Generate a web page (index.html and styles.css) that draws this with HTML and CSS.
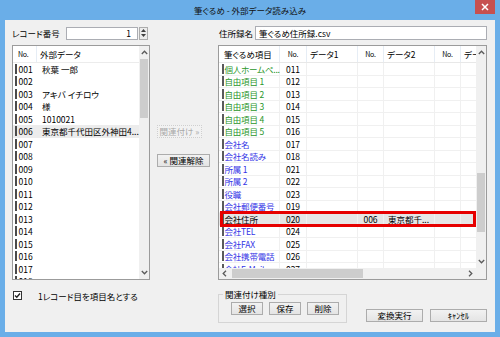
FILE: index.html
```html
<!DOCTYPE html>
<html lang="ja">
<head>
<meta charset="utf-8">
<title>筆ぐるめ - 外部データ読み込み</title>
<link rel="stylesheet" href="styles.css">
</head>
<body>
<div class="window">
  <div class="titlebar">
    <span></span>
    <span class="title">筆ぐるめ - 外部データ読み込み</span>
    <span class="close"><svg width="8" height="8" viewBox="0 0 8 8"><path d="M1 1L7 7M7 1L1 7" stroke="#fff" stroke-width="1.5"/></svg></span>
  </div>
  <div class="client">
    <div class="leftcol">
      <div class="toprow">
        <span class="lbl-rec">レコード番号</span>
        <span class="spin-input">1</span>
        <span class="spin-btn">
          <span class="spin-half"><svg width="5" height="3" viewBox="0 0 5 3"><path d="M0 3L2.5 0L5 3Z" fill="#404040"/></svg></span>
          <span class="spin-half"><svg width="5" height="3" viewBox="0 0 5 3"><path d="M0 0L2.5 3L5 0Z" fill="#404040"/></svg></span>
        </span>
      </div>
      <div class="list">
        <div class="view">
          <div class="lhead"><span class="lc-no no">No.</span><span class="lc-data">外部データ</span></div>
          <div class="lrow"><span class="lc-no"><i class="mk"></i>001</span><span class="lc-data">秋葉 一郎</span></div>
          <div class="lrow"><span class="lc-no"><i class="mk"></i>002</span><span class="lc-data"></span></div>
          <div class="lrow"><span class="lc-no"><i class="mk"></i>003</span><span class="lc-data">アキバ イチロウ</span></div>
          <div class="lrow"><span class="lc-no"><i class="mk"></i>004</span><span class="lc-data">様</span></div>
          <div class="lrow"><span class="lc-no"><i class="mk"></i>005</span><span class="lc-data">1010021</span></div>
          <div class="lrow sel"><span class="lc-no"><i class="mk"></i>006</span><span class="lc-data">東京都千代田区外神田4...</span></div>
          <div class="lrow"><span class="lc-no"><i class="mk"></i>007</span><span class="lc-data"></span></div>
          <div class="lrow"><span class="lc-no"><i class="mk"></i>008</span><span class="lc-data"></span></div>
          <div class="lrow"><span class="lc-no"><i class="mk"></i>009</span><span class="lc-data"></span></div>
          <div class="lrow"><span class="lc-no"><i class="mk"></i>010</span><span class="lc-data"></span></div>
          <div class="lrow"><span class="lc-no"><i class="mk"></i>011</span><span class="lc-data"></span></div>
          <div class="lrow"><span class="lc-no"><i class="mk"></i>012</span><span class="lc-data"></span></div>
          <div class="lrow"><span class="lc-no"><i class="mk"></i>013</span><span class="lc-data"></span></div>
          <div class="lrow"><span class="lc-no"><i class="mk"></i>014</span><span class="lc-data"></span></div>
          <div class="lrow"><span class="lc-no"><i class="mk"></i>015</span><span class="lc-data"></span></div>
          <div class="lrow"><span class="lc-no"><i class="mk"></i>016</span><span class="lc-data"></span></div>
          <div class="lrow"><span class="lc-no"><i class="mk"></i>017</span><span class="lc-data"></span></div>
          <div class="lrow"><span class="lc-no"><i class="mk"></i>018</span><span class="lc-data"></span></div>
        </div>
        <div class="vscroll">
          <span class="arr"><svg width="7" height="5" viewBox="0 0 7 5"><path d="M0.8 4L3.5 1.2L6.2 4" fill="none" stroke="#5a5a5a" stroke-width="1.3"/></svg></span>
          <span class="thumb thumb-left"></span>
          <span class="fill"></span>
          <span class="arr"><svg width="7" height="5" viewBox="0 0 7 5"><path d="M0.8 1L3.5 3.8L6.2 1" fill="none" stroke="#5a5a5a" stroke-width="1.3"/></svg></span>
        </div>
      </div>
      <div class="check">
        <span class="box"><svg width="7" height="7" viewBox="0 0 7 7"><path d="M1 3.5L2.8 5.3L6 1.5" fill="none" stroke="#222" stroke-width="1.4"/></svg></span>
        <span class="check-text">1レコード目を項目名とする</span>
      </div>
    </div>

    <div class="midcol">
      <button class="btn btn-assoc">関連付け »</button>
      <button class="btn btn-unassoc">« 関連解除</button>
    </div>

    <div class="rightcol">
      <div class="toprow">
        <span class="lbl-addr">住所録名</span>
        <span class="text-input">筆ぐるめ住所録.csv</span>
      </div>
      <div class="grid">
        <div class="gview">
          <div class="ghead">
            <span class="gc-name">筆ぐるめ項目</span>
            <span class="gc-no no">No.</span>
            <span class="gc-data">データ1</span>
            <span class="gc-no no">No.</span>
            <span class="gc-data">データ2</span>
            <span class="gc-no no">No.</span>
            <span class="gc-data">データ3</span>
          </div>
          <div class="grow green"><span class="gc-name"><i class="mk"></i>個人ホームペ...</span><span class="gc-no">011</span><span></span><span></span><span></span><span></span><span></span></div>
          <div class="grow green"><span class="gc-name"><i class="mk"></i>自由項目 1</span><span class="gc-no">012</span><span></span><span></span><span></span><span></span><span></span></div>
          <div class="grow green"><span class="gc-name"><i class="mk"></i>自由項目 2</span><span class="gc-no">013</span><span></span><span></span><span></span><span></span><span></span></div>
          <div class="grow green"><span class="gc-name"><i class="mk"></i>自由項目 3</span><span class="gc-no">014</span><span></span><span></span><span></span><span></span><span></span></div>
          <div class="grow green"><span class="gc-name"><i class="mk"></i>自由項目 4</span><span class="gc-no">015</span><span></span><span></span><span></span><span></span><span></span></div>
          <div class="grow green"><span class="gc-name"><i class="mk"></i>自由項目 5</span><span class="gc-no">016</span><span></span><span></span><span></span><span></span><span></span></div>
          <div class="grow blue"><span class="gc-name"><i class="mk"></i>会社名</span><span class="gc-no">017</span><span></span><span></span><span></span><span></span><span></span></div>
          <div class="grow blue"><span class="gc-name"><i class="mk"></i>会社名読み</span><span class="gc-no">018</span><span></span><span></span><span></span><span></span><span></span></div>
          <div class="grow blue"><span class="gc-name"><i class="mk"></i>所属 1</span><span class="gc-no">021</span><span></span><span></span><span></span><span></span><span></span></div>
          <div class="grow blue"><span class="gc-name"><i class="mk"></i>所属 2</span><span class="gc-no">022</span><span></span><span></span><span></span><span></span><span></span></div>
          <div class="grow blue"><span class="gc-name"><i class="mk"></i>役職</span><span class="gc-no">023</span><span></span><span></span><span></span><span></span><span></span></div>
          <div class="grow blue"><span class="gc-name"><i class="mk"></i>会社郵便番号</span><span class="gc-no">019</span><span></span><span></span><span></span><span></span><span></span></div>
          <div class="grow linked"><span class="gc-name"><i class="mk"></i>会社住所</span><span class="gc-no">020</span><span></span><span class="gc-no">006</span><span class="gc-data">東京都千...</span><span></span><span></span></div>
          <div class="grow blue"><span class="gc-name"><i class="mk"></i>会社TEL</span><span class="gc-no">024</span><span></span><span></span><span></span><span></span><span></span></div>
          <div class="grow blue"><span class="gc-name"><i class="mk"></i>会社FAX</span><span class="gc-no">025</span><span></span><span></span><span></span><span></span><span></span></div>
          <div class="grow blue"><span class="gc-name"><i class="mk"></i>会社携帯電話</span><span class="gc-no">026</span><span></span><span></span><span></span><span></span><span></span></div>
          <div class="grow blue"><span class="gc-name"><i class="mk"></i>会社E-Mail</span><span class="gc-no">027</span><span></span><span></span><span></span><span></span><span></span></div>
        </div>
        <div class="vscroll">
          <span class="arr"><svg width="7" height="5" viewBox="0 0 7 5"><path d="M0.8 4L3.5 1.2L6.2 4" fill="none" stroke="#5a5a5a" stroke-width="1.3"/></svg></span>
          <span class="thumb thumb-right"></span>
          <span class="fill"></span>
          <span class="arr"><svg width="7" height="5" viewBox="0 0 7 5"><path d="M0.8 1L3.5 3.8L6.2 1" fill="none" stroke="#5a5a5a" stroke-width="1.3"/></svg></span>
        </div>
        <div class="hscroll">
          <span class="harr"><svg width="5" height="7" viewBox="0 0 5 7"><path d="M4 0.8L1.2 3.5L4 6.2" fill="none" stroke="#5a5a5a" stroke-width="1.3"/></svg></span>
          <span class="hthumb"></span>
          <span class="fill"></span>
          <span class="harr"><svg width="5" height="7" viewBox="0 0 5 7"><path d="M1 0.8L3.8 3.5L1 6.2" fill="none" stroke="#5a5a5a" stroke-width="1.3"/></svg></span>
        </div>
        <div class="corner"></div>
      </div>
      <div class="bottom">
        <fieldset class="group">
          <legend>関連付け種別</legend>
          <div class="gbtns">
            <button class="btn btn-sm">選択</button>
            <button class="btn btn-sm">保存</button>
            <button class="btn btn-sm">削除</button>
          </div>
        </fieldset>
        <div class="actions">
          <button class="btn btn-act">変換実行</button>
          <button class="btn btn-act">ｷｬﾝｾﾙ</button>
        </div>
      </div>
    </div>
  </div>
</div>
</body>
</html>
```

FILE: styles.css
```css
* { box-sizing: border-box; }
body {
  margin: 0;
  font-family: "Noto Sans CJK JP", "Noto Sans", sans-serif;
  font-size: 8.5px;
  font-feature-settings: "palt" 1;
  color: #000;
}
.window {
  width: 500px;
  height: 337px;
  background: #6aaee8;
  padding: 0 5px 5px;
  display: flex;
  flex-direction: column;
}
.titlebar {
  height: 20px;
  display: grid;
  grid-template-columns: 1fr auto 1fr;
}
.title {
  align-self: center;
  font-size: 8.5px;
  line-height: 1;
  color: #111;
}
.close {
  justify-self: end;
  width: 20px;
  height: 14px;
  background: #c75050;
  display: flex;
  align-items: center;
  justify-content: center;
}
.client {
  flex: 1;
  background: #f0f0f0;
  display: flex;
  padding: 6px 8px 0 7px;
}
.leftcol {
  width: 138px;
  display: flex;
  flex-direction: column;
}
.toprow {
  height: 14px;
  display: flex;
  align-items: center;
}
.lbl-rec { width: 54px; }
.spin-input {
  width: 72px;
  height: 13px;
  background: #fff;
  border: 1px solid #abadb3;
  text-align: right;
  padding-right: 6px;
  line-height: 11px;
}
.spin-btn {
  width: 9px;
  height: 13px;
  margin-left: 1px;
  border: 1px solid #acacac;
  background: #ececec;
  display: flex;
  flex-direction: column;
}
.spin-half {
  flex: 1;
  display: flex;
  align-items: center;
  justify-content: center;
}
.list {
  margin-top: 5px;
  height: 235px;
  border: 1px solid #9b9b9b;
  background: #fff;
  display: grid;
  grid-template-columns: 1fr 10px;
}
.view, .gview { overflow: hidden; }
.lhead, .lrow {
  display: grid;
  grid-template-columns: 24px 1fr;
}
.lhead {
  height: 16.5px;
  border-bottom: 1px solid #ececec;
}
.lhead span {
  display: flex;
  align-items: center;
}
.lhead .lc-no { padding-left: 5px; border-right: 1px solid #e6edf5; }
.lhead .lc-data { padding-left: 3px; }
.no { font-size: 7px; letter-spacing: -0.2px; }
.lrow { height: 12.5px; }
.lrow span {
  display: flex;
  align-items: center;
  white-space: nowrap;
  overflow: hidden;
}
.lrow .lc-no { padding-left: 2px; }
.lrow .lc-data { padding-left: 5px; }
.lrow.sel { background: #ececec; }
.mk {
  display: inline-block;
  width: 1.5px;
  height: 10px;
  background: #4a4a4a;
  margin-right: 2px;
  flex: none;
}
.vscroll {
  display: flex;
  flex-direction: column;
  background: #f0f0f0;
}
.arr {
  height: 12.5px;
  display: flex;
  align-items: center;
  justify-content: center;
  flex: none;
}
.thumb {
  background: #cdcdcd;
  margin: 0 1px;
  height: 59px;
  flex: none;
}
.thumb-right { margin-top: 114.5px; }
.fill { flex: 1; }
.check {
  margin-top: 11px;
  height: 9px;
  display: flex;
  align-items: center;
}
.box {
  width: 9px;
  height: 9px;
  margin-left: 1px;
  border: 1px solid #333;
  background: #fff;
  display: flex;
  align-items: center;
  justify-content: center;
}
.check-text { margin-left: 16px; }
.midcol {
  width: 53px;
  margin-left: 7px;
  display: flex;
  flex-direction: column;
  align-items: flex-start;
  padding-top: 99px;
  gap: 16px;
}
.btn {
  height: 13px;
  padding: 0;
  font: inherit;
  font-size: 8.5px;
  line-height: 11px;
  color: #000;
  border: 1px solid #acacac;
  background: linear-gradient(#f2f2f2, #e4e4e4);
  text-align: center;
}
.btn-assoc {
  width: 45px;
  color: #a8a8a8;
  border: 1px dotted #cfcfcf;
  background: #f2f2f2;
}
.btn-unassoc { width: 53px; }
.rightcol {
  width: 269px;
  margin-left: 8px;
  display: flex;
  flex-direction: column;
}
.lbl-addr { width: 37px; padding-left: 1px; }
.text-input {
  width: 232px;
  height: 14px;
  background: #fff;
  border: 1px solid #abadb3;
  padding-left: 3px;
  line-height: 12px;
}
.grid {
  margin-top: 5px;
  height: 235px;
  border: 1px solid #9b9b9b;
  background: #fff;
  display: grid;
  grid-template-columns: 257px 10px;
  grid-template-rows: 222px 11px;
}
.ghead, .grow {
  display: grid;
  grid-template-columns: 61px 27px 51px 26px 51px 26px 40px;
}
.ghead {
  height: 16.5px;
  border-bottom: 1px solid #e8e8e8;
}
.ghead span {
  display: flex;
  align-items: center;
  border-right: 1px solid #e6edf5;
  white-space: nowrap;
}
.ghead .gc-name { padding-left: 5px; }
.ghead .gc-data { padding-left: 3px; }
.gc-no { justify-content: center; }
.grow {
  height: 12.5px;
  position: relative;
}
.grow span {
  display: flex;
  align-items: center;
  border-right: 1px solid #f0f0f0;
  border-bottom: 1px solid #f0f0f0;
  white-space: nowrap;
  overflow: hidden;
  color: #000;
}
.grow .gc-name { padding-left: 3px; overflow: visible; letter-spacing: -0.2px; }
.grow .gc-data { padding-left: 4px; }
.grow .mk { margin-right: 1px; background: #5a5a5a; }
.green .gc-name { color: #2a962a; }
.blue .gc-name { color: #3434e6; }
.linked { background: #e6e6e6; }
.linked::after {
  content: "";
  position: absolute;
  top: -1.5px;
  bottom: -1.5px;
  left: 1px;
  right: 0;
  border: 3px solid #e60000;
  z-index: 1;
}
.hscroll {
  display: flex;
  background: #f0f0f0;
}
.harr {
  width: 11px;
  display: flex;
  align-items: center;
  justify-content: center;
  flex: none;
}
.hthumb {
  width: 131px;
  margin: 1px 0 1px 2px;
  background: #cdcdcd;
  flex: none;
}
.corner { background: #f0f0f0; }
.bottom {
  margin-top: 8px;
  display: flex;
  align-items: flex-end;
}
.group {
  width: 129px;
  margin: 0;
  padding: 2px 0 7px 4px;
  border: 1px solid #d5d5d5;
}
.group legend {
  padding: 0 2px;
  line-height: 12px;
  font-size: 8.5px;
}
.gbtns {
  display: flex;
  gap: 6px;
  margin-left: 8px;
}
.btn-sm { width: 32px; }
.actions {
  margin-left: auto;
  margin-bottom: 1px;
  display: flex;
  gap: 7px;
}
.btn-act { width: 57px; }
```
